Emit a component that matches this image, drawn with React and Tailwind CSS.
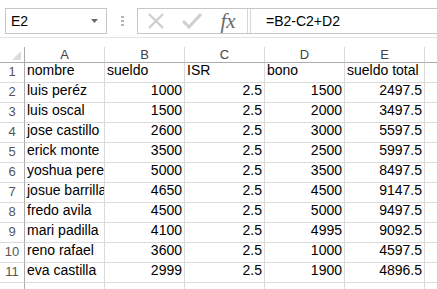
const rows = [
  ["nombre", "sueldo", "ISR", "bono", "sueldo total"],
  ["luis peréz", "1000", "2.5", "1500", "2497.5"],
  ["luis oscal", "1500", "2.5", "2000", "3497.5"],
  ["jose castillo", "2600", "2.5", "3000", "5597.5"],
  ["erick monte", "3500", "2.5", "2500", "5997.5"],
  ["yoshua perez", "5000", "2.5", "3500", "8497.5"],
  ["josue barrillas", "4650", "2.5", "4500", "9147.5"],
  ["fredo avila", "4500", "2.5", "5000", "9497.5"],
  ["mari padilla", "4100", "2.5", "4995", "9092.5"],
  ["reno rafael", "3600", "2.5", "1000", "4597.5"],
  ["eva castilla", "2999", "2.5", "1900", "4896.5"],
];

const cols = ["A", "B", "C", "D", "E"];

function Cell({ children, right }) {
  return (
    <div
      className={`h-[20px] border-r border-b border-[#dadada] overflow-hidden whitespace-nowrap flex items-end pb-[1px] ${
        right ? "justify-end pr-[2px]" : "pl-[2px]"
      }`}
    >
      {children}
    </div>
  );
}

export default function App() {
  return (
    <div
      className="w-[437px] h-[289px] bg-white overflow-hidden text-black"
      style={{ fontFamily: '"Liberation Sans", Arial, sans-serif' }}
    >
      {/* toolbar */}
      <div className="flex items-center h-[26px] mt-[8px]">
        <div className="ml-[5px] w-[102px] h-full border border-[#c6c6c6] flex items-center justify-between pl-[5px] pr-[8px] text-[14px]">
          <span>E2</span>
          <svg width="7" height="4" viewBox="0 0 7 4">
            <path d="M0 0h7L3.5 4z" fill="#6a6a6a" />
          </svg>
        </div>
        <div className="w-[30px] flex flex-col items-center gap-[2px]">
          <div className="w-[3px] h-[2px] bg-[#b5b5b5]" />
          <div className="w-[3px] h-[2px] bg-[#b5b5b5]" />
          <div className="w-[3px] h-[2px] bg-[#b5b5b5]" />
        </div>
        <div className="flex-1 h-full border border-r-0 border-[#c6c6c6] flex items-center">
          <div className="w-[36px] flex justify-center">
            <svg width="18" height="16" viewBox="0 0 18 16">
              <path d="M2 1l14 14M16 1L2 15" stroke="#cfcfcf" strokeWidth="2.4" fill="none" />
            </svg>
          </div>
          <div className="w-[36px] flex justify-center">
            <svg width="20" height="16" viewBox="0 0 20 16">
              <path d="M1 8l6 6L19 1" stroke="#cfcfcf" strokeWidth="3" fill="none" />
            </svg>
          </div>
          <div className="w-[36px] flex justify-center">
            <span
              className="italic text-[21px] text-[#6a6a6a] leading-none"
              style={{ fontFamily: '"Liberation Serif", serif' }}
            >
              fx
            </span>
          </div>
          <div className="h-full flex items-stretch gap-[2px] ml-[1px]">
            <div className="w-px bg-[#d6d6d6]" />
            <div className="w-px bg-[#d6d6d6]" />
          </div>
          <span className="ml-[15px] text-[14px]">=B2-C2+D2</span>
        </div>
      </div>
      <div className="h-px bg-[#e3e3e3] mt-[3px]" />

      {/* sheet */}
      <div className="mt-[9px] grid grid-cols-[25px_80px_80px_80px_80px_80px_1fr] text-[14px]">
        <div className="h-[16px] border-r border-b border-[#ababab] flex items-end justify-end pr-[3px] pb-[2px]">
          <svg width="9" height="9" viewBox="0 0 9 9">
            <path d="M9 0v9H0z" fill="#dcdcdc" />
          </svg>
        </div>
        {cols.map((c) => (
          <div
            key={c}
            className="h-[16px] border-r border-[#dadada] border-b-[#ababab] border-b flex items-center justify-center text-[13px] text-[#444]"
          >
            {c}
          </div>
        ))}
        <div className="h-[16px] border-b border-[#ababab]" />
        {rows.map((r, i) => (
          <div key={i} className="contents">
            <div className="h-[20px] border-r border-[#ababab] border-b border-b-[#dadada] flex items-end justify-center pb-[1px] text-[13px] text-[#555]">
              {i + 1}
            </div>
            <Cell>{r[0]}</Cell>
            <Cell right={i > 0}>{r[1]}</Cell>
            <Cell right={i > 0}>{r[2]}</Cell>
            <Cell right={i > 0}>{r[3]}</Cell>
            <Cell right={i > 0}>{r[4]}</Cell>
            <div className="h-[20px] border-b border-[#dadada]" />
          </div>
        ))}
        <div className="h-[20px] border-r border-[#ababab]" />
        <div className="h-[20px] border-r border-[#dadada]" />
        <div className="h-[20px] border-r border-[#dadada]" />
        <div className="h-[20px] border-r border-[#dadada]" />
        <div className="h-[20px] border-r border-[#dadada]" />
        <div className="h-[20px] border-r border-[#dadada]" />
        <div className="h-[20px]" />
      </div>
    </div>
  );
}
